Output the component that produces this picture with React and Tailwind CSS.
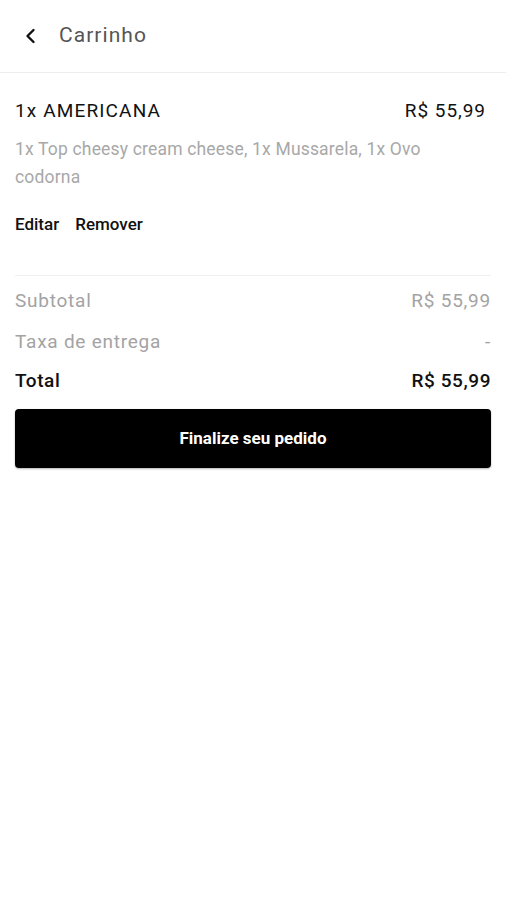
export default function App() {
  return (
    <div className="min-h-[900px] bg-white font-['Roboto',sans-serif]">
      <header className="flex h-[73px] items-center border-b border-[#ededed] px-[24px]">
        <svg width="14" height="16" viewBox="0 0 14 16" fill="none" className="mr-[21px]">
          <path d="M9.5 2L3.5 8L9.5 14" stroke="#111" strokeWidth="2.4" strokeLinecap="round" strokeLinejoin="round" />
        </svg>
        <h1 className="text-[21px] tracking-[0.05em] text-[#555]">Carrinho</h1>
      </header>

      <section className="px-[15px]">
        <div className="pt-[26px]">
          <div className="flex items-center justify-between leading-[24px]">
            <span className="text-[19px] tracking-[0.06em] text-[#111]">1x AMERICANA</span>
            <span className="pr-[5px] text-[19px] tracking-[0.05em] text-[#111]">R$ 55,99</span>
          </div>
          <p className="mt-[12px] pr-[20px] text-[17.5px] leading-[28px] tracking-[0.01em] text-[#a8a8a8]">
            1x Top cheesy cream cheese, 1x Mussarela, 1x Ovo codorna
          </p>
          <div className="mt-[22px] flex gap-[16px] text-[17px] leading-[22px] font-medium text-[#111]">
            <span>Editar</span>
            <span>Remover</span>
          </div>
        </div>

        <div className="mt-[40px] border-t border-[#efefef] pt-[13px]">
          <div className="flex justify-between text-[19px] leading-[24px] tracking-[0.04em] text-[#a3a3a3]">
            <span>Subtotal</span>
            <span>R$ 55,99</span>
          </div>
          <div className="mt-[17px] flex justify-between text-[19px] leading-[24px] tracking-[0.04em] text-[#a3a3a3]">
            <span>Taxa de entrega</span>
            <span>-</span>
          </div>
          <div className="mt-[15px] flex justify-between text-[19px] leading-[24px] font-medium tracking-[0.03em] text-[#111]">
            <span>Total</span>
            <span>R$ 55,99</span>
          </div>
          <button className="mt-[16px] flex h-[59px] w-full items-center justify-center rounded-[4px] bg-black text-[17px] font-bold text-white shadow-[0_1px_2px_rgba(0,0,0,0.3)]">
            Finalize seu pedido
          </button>
        </div>
      </section>
    </div>
  );
}
